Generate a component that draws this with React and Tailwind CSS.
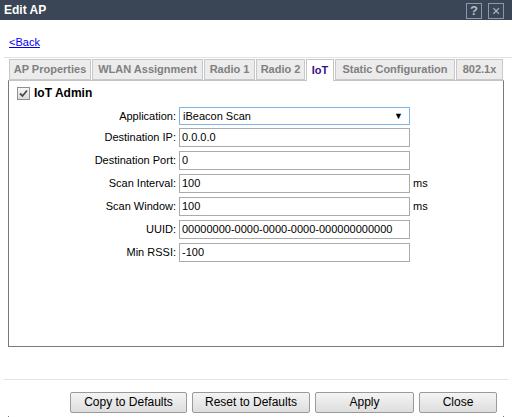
import React from "react";

const tabs = [
  { label: "AP Properties", w: "w-[82px]" },
  { label: "WLAN Assignment", w: "w-[111px]" },
  { label: "Radio 1", w: "w-[51px]" },
  { label: "Radio 2", w: "w-[49px]" },
  { label: "IoT", w: "w-[28px]", active: true },
  { label: "Static Configuration", w: "w-[120px]" },
  { label: "802.1x", w: "w-[47px]" },
];

const rows = [
  { label: "Destination IP:", value: "0.0.0.0" },
  { label: "Destination Port:", value: "0" },
  { label: "Scan Interval:", value: "100", unit: "ms" },
  { label: "Scan Window:", value: "100", unit: "ms" },
  { label: "UUID:", value: "00000000-0000-0000-0000-000000000000" },
  { label: "Min RSSI:", value: "-100" },
];

function Field({ label, value, unit }) {
  return (
    <div className="flex items-center h-[19px] mt-[4px] leading-[17px]">
      <div className="w-[168px] text-right pr-[1px]">{label}</div>
      <div className="ml-[2px] w-[231px] h-[19px] border border-[#ababab] bg-white pl-[2px]">
        {value}
      </div>
      {unit && <span className="ml-[3px]">{unit}</span>}
    </div>
  );
}

function Btn({ children, w }) {
  return (
    <button
      className={`${w} h-[21px] border border-[#9a9a9a] rounded-[2px] bg-gradient-to-b from-[#f4f4f4] to-[#dedede] text-[12px] text-black leading-[19px]`}
    >
      {children}
    </button>
  );
}

export default function App() {
  return (
    <div className="w-[512px] h-[417px] bg-white overflow-hidden text-[11px] leading-[14px] text-black font-['Liberation_Sans',Arial,sans-serif]">
      {/* Title bar */}
      <div className="h-[20px] bg-[#3a4556] flex items-center justify-between pl-[4px] pr-[8px]">
        <span className="text-white font-bold text-[12px]">Edit AP</span>
        <div className="flex gap-[6px] pt-[1px]">
          <div className="w-[16px] h-[16px] border border-[#8e98a6] flex items-center justify-center text-[#b4bcc6] font-bold text-[13px] leading-none">
            ?
          </div>
          <div className="w-[16px] h-[16px] border border-[#8e98a6] flex items-center justify-center text-[#b4bcc6] text-[14px] leading-none">
            ×
          </div>
        </div>
      </div>

      {/* Back link */}
      <div className="h-[37px] pt-[15px] pl-[9px]">
        <a href="#" className="text-[#0000ee] underline">
          &lt;Back
        </a>
      </div>

      {/* Tabs */}
      <div className="ml-[4px] border-t border-[#e2e2e2] pl-[5px] flex items-end gap-[1px] h-[23px]">
        {tabs.map((t) =>
          t.active ? (
            <div
              key={t.label}
              className={`${t.w} h-[22px] bg-white border-x border-t border-[#c4c4c4] text-center font-bold text-[#3a1280] leading-[20px] relative z-10 -mb-px`}
            >
              {t.label}
            </div>
          ) : (
            <div
              key={t.label}
              className={`${t.w} h-[21px] bg-[#ececec] border border-[#c8c8c8] text-center font-bold text-[#808080] leading-[19px]`}
            >
              {t.label}
            </div>
          )
        )}
      </div>

      {/* Panel */}
      <div className="ml-[8px] w-[496px] h-[267px] border-x border-b border-t border-t-[#c4c4c4] border-x-[#7a7a7a] border-b-[#7a7a7a]">
        <div className="flex items-center h-[13px] mt-[6px] pl-[8px]">
          <span className="w-[13px] h-[13px] border border-[#8f8f8f] bg-gradient-to-b from-[#f6f6f6] to-[#dcdcdc] flex items-center justify-center">
            <svg width="9" height="9" viewBox="0 0 9 9">
              <path d="M1 4.5 L3.5 7 L8 1.5" fill="none" stroke="#4a4a4a" strokeWidth="1.8" />
            </svg>
          </span>
          <span className="ml-[4px] font-bold text-[12px] leading-[13px]">IoT Admin</span>
        </div>

        <div className="flex items-center h-[18px] mt-[7px] leading-[16px]">
          <div className="w-[168px] text-right pr-[1px]">Application:</div>
          <div className="ml-[2px] w-[231px] h-[18px] border border-[#7eb4ea] bg-white pl-[3px] pr-[6px] flex items-center justify-between">
            <span>iBeacon Scan</span>
            <span className="text-[9px]">▼</span>
          </div>
        </div>
        <div className="-mt-[1px]">
          {rows.map((r) => (
            <Field key={r.label} {...r} />
          ))}
        </div>
      </div>

      {/* Footer */}
      <div className="mx-[4px] mt-[32px] border-t border-[#e4e4e4]" />
      <div className="flex pl-[70px] mt-[12px] gap-[5px]">
        <Btn w="w-[117px]">Copy to Defaults</Btn>
        <Btn w="w-[118px]">Reset to Defaults</Btn>
        <div className="w-[99px] flex">
          <Btn w="w-[100px]">Apply</Btn>
        </div>
        <Btn w="w-[78px]">Close</Btn>
      </div>
      <div className="mx-[8px] mt-[3px] w-[496px] h-[1px] border-x border-[#7a7a7a]" />
    </div>
  );
}
